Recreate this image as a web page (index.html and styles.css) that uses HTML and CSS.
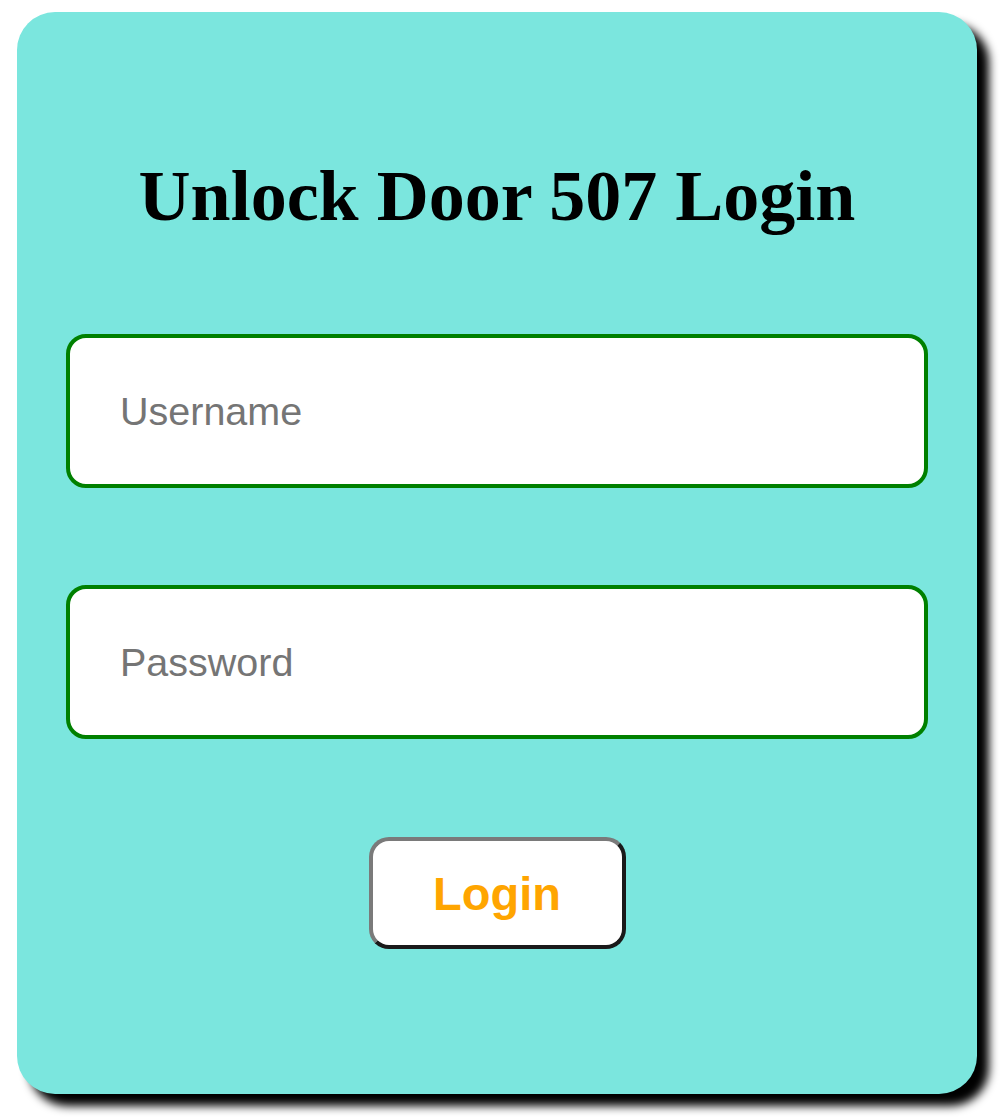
FILE: index.html
```html
<!DOCTYPE html>
<html lang="en">
<head>
<meta charset="utf-8">
<title>Unlock Door 507 Login</title>
<link rel="stylesheet" href="styles.css">
</head>
<body>
<main class="card">
  <h1 class="title">Unlock Door 507 Login</h1>
  <form class="login-form">
    <input class="field" type="text" placeholder="Username">
    <input class="field" type="password" placeholder="Password">
    <button class="login-btn" type="button">Login</button>
  </form>
</main>
</body>
</html>
```

FILE: styles.css
```css
html, body {
  margin: 0;
  padding: 0;
  background: #ffffff;
}

body {
  padding: 12px 0 25px 17px;
}

.card {
  box-sizing: border-box;
  width: 960px;
  height: 1082px;
  background: #7be6de;
  border-radius: 38px;
  box-shadow: 12px 12px 10px #000000;
  padding: 144px 49px 0;
  display: flex;
  flex-direction: column;
  align-items: stretch;
}

.title {
  margin: 0;
  font-family: "Liberation Serif", "Times New Roman", serif;
  font-weight: bold;
  font-size: 72px;
  line-height: 80px;
  text-align: center;
  color: #000000;
}

.login-form {
  margin-top: 98px;
  display: flex;
  flex-direction: column;
  align-items: stretch;
  gap: 97px;
}

.field {
  box-sizing: border-box;
  height: 154px;
  width: 100%;
  margin: 0;
  border: 4px solid #008000;
  border-radius: 20px;
  background: #ffffff;
  padding: 0 20px 0 50px;
  font-family: "Liberation Sans", Arial, sans-serif;
  font-size: 39.5px;
  color: #333333;
  outline: none;
}

.field::placeholder {
  color: #757575;
  opacity: 1;
}

.login-btn {
  box-sizing: border-box;
  align-self: center;
  margin-top: 1px;
  width: 257px;
  height: 112px;
  background: #ffffff;
  border: 4px solid;
  border-color: #7a7a7a #1a1a1a #1a1a1a #7a7a7a;
  border-radius: 20px;
  font-family: "Liberation Sans", Arial, sans-serif;
  font-weight: bold;
  font-size: 47px;
  color: #ffa500;
  padding: 0;
  cursor: pointer;
}
```
